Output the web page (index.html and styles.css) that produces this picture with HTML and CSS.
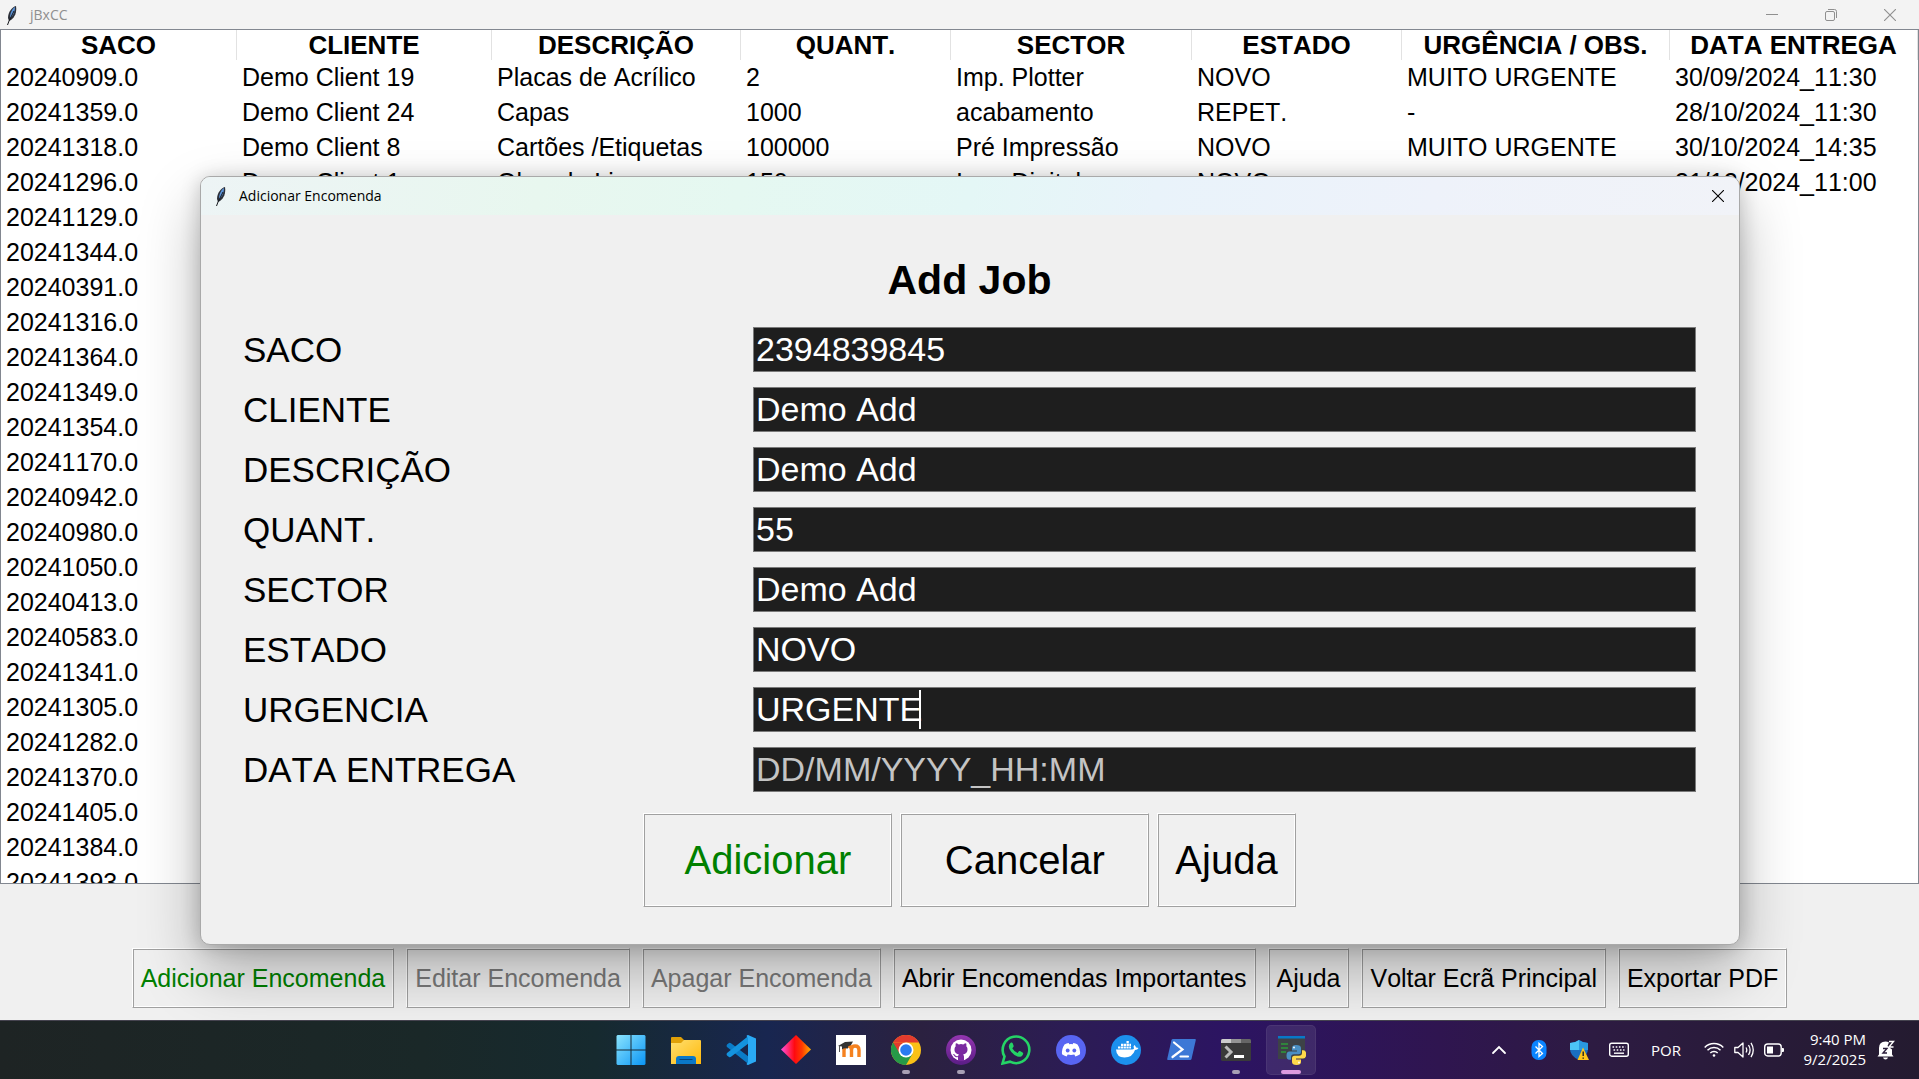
FILE: index.html
```html
<!DOCTYPE html>
<html lang="pt">
<head>
<meta charset="utf-8">
<title>jBxCC</title>
<link rel="stylesheet" href="styles.css">
</head>
<body>
<svg class="defs" width="0" height="0" aria-hidden="true">
  <symbol id="feather" viewBox="0 0 12 20">
    <path d="M10 1C6 2 2 7 2 13l1 3 2-1C9 12 11 7 10 1z" fill="#2b2f38"/>
    <path d="M9 2C6 4 4 8 4 13c3-2 5-6 5-11z" fill="#5b93d8"/>
    <path d="M8 6L3 16 1.500 20" fill="none" stroke="#16181c" stroke-width="1"/>
  </symbol>
  <symbol id="close" viewBox="0 0 12 12">
    <path d="M0 0l12 12M12 0L0 12" fill="none" stroke="currentColor" stroke-width="1.100"/>
  </symbol>
</svg>

<main class="window">
  <header class="titlebar">
    <svg class="feather"><use href="#feather"/></svg>
    <span class="titlebar-text">jBxCC</span>
    <div class="window-controls">
      <button type="button" aria-label="Minimizar"><svg width="12" height="12"><path d="M0 5.500h12" stroke="currentColor"/></svg></button>
      <button type="button" aria-label="Restaurar"><svg width="12" height="12" fill="none" stroke="currentColor"><rect x=".5" y="2.500" width="9" height="9" rx="1.500"/><path d="M3 .5h6.500a2 2 0 0 1 2 2V9"/></svg></button>
      <button type="button" aria-label="Fechar"><svg width="12" height="12"><use href="#close"/></svg></button>
    </div>
  </header>

  <div class="table-pane">
    <table class="jobs">
      <colgroup><col class="c-saco"><col class="c-cliente"><col class="c-desc"><col class="c-quant"><col class="c-sector"><col class="c-estado"><col class="c-urg"><col class="c-data"></colgroup>
      <thead>
        <tr><th>SACO</th><th>CLIENTE</th><th>DESCRIÇÃO</th><th>QUANT.</th><th>SECTOR</th><th>ESTADO</th><th>URGÊNCIA / OBS.</th><th>DATA ENTREGA</th></tr>
      </thead>
      <tbody>
        <tr><td>20240909.0</td><td>Demo Client 19</td><td>Placas de Acrílico</td><td>2</td><td>Imp. Plotter</td><td>NOVO</td><td>MUITO URGENTE</td><td>30/09/2024_11:30</td></tr>
        <tr><td>20241359.0</td><td>Demo Client 24</td><td>Capas</td><td>1000</td><td>acabamento</td><td>REPET.</td><td>-</td><td>28/10/2024_11:30</td></tr>
        <tr><td>20241318.0</td><td>Demo Client 8</td><td>Cartões /Etiquetas</td><td>100000</td><td>Pré Impressão</td><td>NOVO</td><td>MUITO URGENTE</td><td>30/10/2024_14:35</td></tr>
        <tr><td>20241296.0</td><td>Demo Client 1</td><td>Obra de Livro</td><td>150</td><td>Imp. Digital</td><td>NOVO</td><td>-</td><td>31/12/2024_11:00</td></tr>
        <tr><td>20241129.0</td></tr>
        <tr><td>20241344.0</td></tr>
        <tr><td>20240391.0</td></tr>
        <tr><td>20241316.0</td></tr>
        <tr><td>20241364.0</td></tr>
        <tr><td>20241349.0</td></tr>
        <tr><td>20241354.0</td></tr>
        <tr><td>20241170.0</td></tr>
        <tr><td>20240942.0</td></tr>
        <tr><td>20240980.0</td></tr>
        <tr><td>20241050.0</td></tr>
        <tr><td>20240413.0</td></tr>
        <tr><td>20240583.0</td></tr>
        <tr><td>20241341.0</td></tr>
        <tr><td>20241305.0</td></tr>
        <tr><td>20241282.0</td></tr>
        <tr><td>20241370.0</td></tr>
        <tr><td>20241405.0</td></tr>
        <tr><td>20241384.0</td></tr>
        <tr><td>20241393.0</td></tr>
      </tbody>
    </table>
  </div>

  <footer class="actions">
    <button class="btn primary" type="button">Adicionar Encomenda</button>
    <button class="btn" type="button" disabled>Editar Encomenda</button>
    <button class="btn" type="button" disabled>Apagar Encomenda</button>
    <button class="btn" type="button">Abrir Encomendas Importantes</button>
    <button class="btn" type="button">Ajuda</button>
    <button class="btn" type="button">Voltar Ecrã Principal</button>
    <button class="btn" type="button">Exportar PDF</button>
  </footer>
</main>

<section class="dialog" role="dialog" aria-labelledby="dialog-title">
  <header class="dialog-bar">
    <svg class="feather"><use href="#feather"/></svg>
    <span class="titlebar-text">Adicionar Encomenda</span>
    <button class="dialog-close" type="button" aria-label="Fechar"><svg width="12" height="12"><use href="#close"/></svg></button>
  </header>
  <form class="dialog-form">
    <h1 id="dialog-title">Add Job</h1>
    <div class="field"><label for="f-saco">SACO</label><input id="f-saco" type="text" value="2394839845"></div>
    <div class="field"><label for="f-cliente">CLIENTE</label><input id="f-cliente" type="text" value="Demo Add"></div>
    <div class="field"><label for="f-desc">DESCRIÇÃO</label><input id="f-desc" type="text" value="Demo Add"></div>
    <div class="field"><label for="f-quant">QUANT.</label><input id="f-quant" type="text" value="55"></div>
    <div class="field"><label for="f-sector">SECTOR</label><input id="f-sector" type="text" value="Demo Add"></div>
    <div class="field"><label for="f-estado">ESTADO</label><input id="f-estado" type="text" value="NOVO"></div>
    <div class="field has-caret"><label for="f-urg">URGENCIA</label><input id="f-urg" type="text" value="URGENTE"><span class="caret"></span></div>
    <div class="field"><label for="f-data">DATA ENTREGA</label><input id="f-data" type="text" placeholder="DD/MM/YYYY_HH:MM"></div>
    <div class="dialog-buttons">
      <button class="btn large wide primary" type="button">Adicionar</button>
      <button class="btn large wide" type="button">Cancelar</button>
      <button class="btn large" type="button">Ajuda</button>
    </div>
  </form>
</section>

<nav class="taskbar" aria-label="Barra de tarefas">
  <div class="apps">
    <button type="button" aria-label="Iniciar"><svg viewBox="0 0 30 30"><defs><linearGradient id="win" x1="0" y1="0" x2="1" y2="1"><stop offset="0" stop-color="#8be4fd"/><stop offset="1" stop-color="#0a95f5"/></linearGradient></defs><path fill="url(#win)" d="M1.500 0H14.500v14.500H.5V1zM15.500 0H28.500l1 1v13.500h-14zM.5 15.500h14V30H1.500l-1-1zM15.500 15.500h14V29l-1 1h-13z"/></svg></button>
    <button type="button" aria-label="Explorador"><svg viewBox="0 0 30 30"><defs><linearGradient id="fold" x1="0" y1="0" x2="1" y2="1"><stop offset="0" stop-color="#ffdf70"/><stop offset="1" stop-color="#ffb90a"/></linearGradient></defs><path d="M0 3q0-1 1-1h9l3 3v4H0z" fill="#e0a008"/><path d="M0 8h10l3-3h16q1 0 1 1v23H0z" fill="url(#fold)"/><path d="M5 29v-5q0-3 3-3h14q3 0 3 3v5z" fill="#0a78c8"/><path d="M8.500 24.500h13" stroke="#06447a"/></svg></button>
    <button type="button" aria-label="Visual Studio Code"><svg viewBox="0 0 30 30"><path d="M1 9.500L3 8q1-.6 2 .2L23 22v7.500L1 12q-1-1 0-2.500z" fill="#0a7cc8"/><path d="M1 20.500L3 22q1 .6 2-.2L23 8V.5L1 18q-1 1 0 2.500z" fill="#1493de"/><path d="M22 0l8 3.500v23L22 30q-1 0-1.500-1L22 27V3l-1.500-2q.5-1 1.500-1z" fill="#2aaaf5"/></svg></button>
    <button type="button" aria-label="Jogo"><svg viewBox="0 0 30 30"><defs><linearGradient id="dia"><stop offset="0" stop-color="#ff50e0"/><stop offset=".45" stop-color="#ff0a10"/><stop offset=".7" stop-color="#ff3a00"/><stop offset="1" stop-color="#ffb000"/></linearGradient></defs><path d="M15 0l15 14.500L15 29 0 14.500z" fill="url(#dia)"/></svg></button>
    <button type="button" aria-label="Moodle"><svg viewBox="0 0 30 30"><path fill="#fff" d="M0 0h30v30H0z"/><path d="M8 22v-7q0-4 4-4 3.500 0 3.500 4v7M15.500 15q0-4 3.500-4 4 0 4 4v7" fill="none" stroke="#f58220" stroke-width="3.400"/><path d="M2 11l7-4 8-.500-2 3.500-3 1.500v2q-4-1-6 1v-3z" fill="#333"/><path d="M3.500 11v6" stroke="#555"/></svg></button>
    <button class="running" type="button" aria-label="Chrome"><svg viewBox="0 0 30 30"><circle cx="15" cy="15" r="15" fill="#fbc117"/><path d="M2 7.500A15 15 0 0 0 15 30l6.500-11.300L15 15z" fill="#269a48"/><path d="M2 7.500A15 15 0 0 1 28 7.500H12z" fill="#e33b2e"/><path d="M2 7.500l6.500 11.200L15 7.500z" fill="#e33b2e"/><path d="M2 7.500l6.500 11.200-4 3z" fill="#269a48"/><circle cx="15" cy="15" r="7.500" fill="#fff"/><circle cx="15" cy="15" r="5.800" fill="#2a7bf0"/></svg></button>
    <button class="running" type="button" aria-label="GitHub Desktop"><svg viewBox="0 0 30 30"><defs><linearGradient id="gh" x1="0" y1="0" x2="0" y2="1"><stop offset="0" stop-color="#9436b0"/><stop offset="1" stop-color="#5b1d86"/></linearGradient></defs><circle cx="15" cy="15" r="15" fill="url(#gh)"/><circle cx="15" cy="15" r="10.500" fill="#fff"/><path d="M12 26v-4q-3 .8-4-1.500-.5-1-1.200-1.500 1.400-.4 2.400 1.200 1 1.400 2.900.8.100-1 .8-1.600Q8 18.500 8.500 14q.1-1.600 1.200-2.800-.4-1.400.2-3 1.200 0 2.900 1.200 2.200-.6 4.400 0 1.700-1.200 2.900-1.200.6 1.600.2 3 1.200 1.200 1.200 2.800.4 4.500-4.400 5.400.9.800.9 2.400V26z" fill="#7a2aa0"/></svg></button>
    <button type="button" aria-label="WhatsApp"><svg viewBox="0 0 30 30"><path d="M1.500 28.500l2-7A13.300 13.300 0 1 1 9 26.700z" fill="none" stroke="#25d366" stroke-width="2.600"/><path d="M10 7.500q1.300-.3 1.700.8l1 2.600q.1.700-.5 1.300l-.9 1q1.700 3.400 5.300 4.700l1.300-1.600q.5-.5 1.100-.2l2.600 1.300q.8.400.5 1.500-.8 2.900-4.200 2.900Q14 21.500 10.300 17 7.800 14 7.800 11.500q0-2.600 2.200-4z" fill="#25d366"/></svg></button>
    <button type="button" aria-label="Discord"><svg viewBox="0 0 30 30"><circle cx="15" cy="15" r="15" fill="#5865f2"/><path d="M8.500 9.500q2-1.200 4.200-1.500l.6 1.200q1.700-.3 3.400 0l.6-1.200q2.200.3 4.200 1.500 3 4.500 2.500 9.700-2 1.600-4.600 2.300l-1.100-1.900q-3.300.9-6.600 0l-1.100 1.900Q8 20.800 6 19.200 5.500 14 8.500 9.500z" fill="#fff"/><ellipse cx="11.700" cy="15.500" rx="1.900" ry="2.100" fill="#5865f2"/><ellipse cx="18.300" cy="15.500" rx="1.900" ry="2.100" fill="#5865f2"/></svg></button>
    <button type="button" aria-label="Docker"><svg viewBox="0 0 30 30"><circle cx="15" cy="15" r="15" fill="#1c90ed"/><path d="M5 14.500h16q1.500 0 2-1-1-2 .2-3.500 1.500.9 1.800 2.500 1.500-.1 2.500.5-1 2-3.500 2-2.500 7.500-10.500 7.500Q5.500 22.500 5 14.500z" fill="#fff"/><path d="M7 12.500h13M10 9.800h10M15.500 7.200h2.500" stroke="#fff" stroke-width="2.200" stroke-dasharray="2.300 .5"/></svg></button>
    <button type="button" aria-label="PowerShell"><svg viewBox="0 0 30 30"><path d="M7 4h22q1 0 .8 1l-4.300 19q-.3 1-1.300 1H2q-1 0-.8-1L5.500 5q.3-1 1.500-1z" fill="#3d78d6"/><path d="M8 7.500l8.500 7L6.500 22M14.500 21.500h7.500" fill="none" stroke="#fff" stroke-width="2.200" stroke-linecap="round"/></svg></button>
    <button class="running" type="button" aria-label="Terminal"><svg viewBox="0 0 30 30"><rect y="4" width="30" height="22" rx="1.500" fill="#3a3a3a"/><path d="M0 8V5.500Q0 4 1.500 4H10v4z" fill="#ccc"/><path d="M10 4h10v4H10z" fill="#949494"/><path d="M20 4h8.500Q30 4 30 5.500V8H20z" fill="#666"/><path d="M4.500 11.500L10 17l-5.500 5.500" fill="none" stroke="#bbb" stroke-width="3"/><path d="M13 21.500h10" stroke="#fff" stroke-width="3"/></svg></button>
    <button class="running active" type="button" aria-label="Python"><svg viewBox="0 0 30 30"><path d="M2 1h27v23H2z" fill="#3d4247"/><path d="M2 1h27v2.500H2z" fill="#0878c8"/><path d="M5 9h7M5 13h7M5 17h5" stroke="#2d9b3a" stroke-width="1.300"/><path d="M20 10q-4 0-4 3v2.500h5v1h-7.500q-3 0-3 4.200 0 4 2.800 4H15v-2.500q0-3 3-3h4.500q2.500 0 2.500-2.500V13q0-3-5-3z" fill="#4a8fc4"/><path d="M20.500 30q4.500 0 4.500-3v-2.500h-5v-1h7q3.200 0 3.200-4.200 0-4-2.800-4H26v2.500q0 3-3 3h-4.500Q16 20.800 16 23.500V27q0 3 4.500 3z" fill="#ffd94a"/><circle cx="18" cy="12.500" r=".9" fill="#fff"/><circle cx="23" cy="27.500" r=".9" fill="#fff"/></svg></button>
  </div>
  <div class="tray">
    <button type="button" aria-label="Mostrar ícones ocultos"><svg width="20" height="20" viewBox="0 0 20 20"><path d="M4 13l6-6 6 6" fill="none" stroke="#fff" stroke-width="1.800" stroke-linecap="round"/></svg></button>
    <button type="button" aria-label="Bluetooth"><svg width="20" height="20" viewBox="0 0 20 20"><rect x="2.500" width="15" height="20" rx="7" fill="#0a84ff"/><path d="M6.500 6.500l7 7L10 16.500v-13l3.500 3-7 7" fill="none" stroke="#fff" stroke-width="1.300"/></svg></button>
    <button type="button" aria-label="Segurança"><svg width="20" height="20" viewBox="0 0 20 20"><path d="M10 0q4 3 9 3v6q0 7-9 11Q1 16 1 9V3q5 0 9-3z" fill="#1a6fc0"/><path d="M10 0v10H1V3q5 0 9-3z" fill="#4cc4f5"/><path d="M10 0q4 3 9 3v7h-9z" fill="#2a9ae0"/><path d="M14 7.500L20 20H8.500z" fill="#ffc61a"/><path d="M14.200 11.500v4.500M14.200 17.500v1.300" stroke="#222" stroke-width="1.400"/></svg></button>
    <button type="button" aria-label="Teclado"><svg width="20" height="20" viewBox="0 0 20 20" fill="none" stroke="#fff"><rect x=".7" y="3.200" width="18.600" height="13" rx="2" stroke-width="1.400"/><path d="M3.500 7h13M4.500 10h11" stroke-width="1.600" stroke-dasharray="1.600 1.600"/><path d="M5 13.200h10" stroke-width="1.400"/></svg></button>
    <span class="lang">POR</span>
    <button class="status" type="button" aria-label="Rede, som e bateria">
      <svg width="20" height="20" viewBox="0 0 20 20" fill="none" stroke="#fff" stroke-width="1.500"><path d="M.7 7.500a13 13 0 0 1 18.600 0M3.500 10.300a9.200 9.200 0 0 1 13 0M6.300 13a5.200 5.200 0 0 1 7.400 0"/><circle cx="10" cy="15.500" r="1.300" fill="#fff" stroke="none"/></svg>
      <svg width="20" height="20" viewBox="0 0 20 20" fill="none" stroke="#fff" stroke-width="1.300"><path d="M.8 7.500H4L9 3v14l-5-4.500H.8z" stroke-linejoin="round"/><path d="M12 7.500q1.600 2.500 0 5M14.500 5q3.200 5 0 10M17 2.800q4.500 7.200 0 14.400"/></svg>
      <svg width="20" height="20" viewBox="0 0 20 20"><rect x=".7" y="4" width="16.500" height="12" rx="3" fill="none" stroke="#fff" stroke-width="1.400"/><path d="M3 6.500h6v7H3z" fill="#fff"/><path d="M18 8h1q1 0 1 1v2q0 1-1 1h-1z" fill="#fff"/></svg>
    </button>
    <div class="clock"><time datetime="21:40">9:40 PM</time><time datetime="2025-09-02">9/2/2025</time></div>
    <button type="button" aria-label="Notificações"><svg width="20" height="20" viewBox="0 0 20 20"><path d="M3 14.500V8q0-6.500 6.500-6.500 2 0 3.500 1L11.500 6 16 9.500v5l1.500 2H1.500z" fill="#fff"/><path d="M7 17.500h5q-.5 2-2.500 2t-2.500-2z" fill="#fff"/><path d="M7 8.500h4L7 13h4" fill="none" stroke="#2a1c3a" stroke-width="1.400"/><path d="M13 1.500h4.500L13 7h4.500" fill="none" stroke="#fff" stroke-width="1.400"/></svg></button>
  </div>
</nav>
</body>
</html>
```
FILE: styles.css
```css
* { box-sizing: border-box; }

body {
  margin: 0;
  height: 100vh;
  display: flex;
  flex-direction: column;
  overflow: hidden;
  position: relative;
  background: #f0f0f0;
  color: #000;
  font-family: "Liberation Sans", Arial, sans-serif;
  font-kerning: none;
}

button {
  margin: 0;
  padding: 0;
  border: 0;
  background: none;
  color: inherit;
  font: inherit;
}

.defs { position: absolute; }

/* Main window */
.window {
  flex: 1;
  min-height: 0;
  display: flex;
  flex-direction: column;
}

.titlebar {
  flex: none;
  height: 29px;
  display: flex;
  align-items: center;
  gap: 12px;
  padding-left: 6px;
  background: #f3f3f3;
  color: #8f8f8f;
}

.titlebar-text {
  font: 14px/20px "Open Sans", "Noto Sans", sans-serif;
}

.feather { width: 12px; height: 20px; }

.window-controls {
  margin-left: auto;
  display: flex;
}

.window-controls button {
  width: 59px;
  height: 29px;
  display: grid;
  place-items: center;
}

/* Job list */
.table-pane {
  flex: 1;
  min-height: 0;
  overflow: hidden;
  background: #fff;
  border: 1px solid #828790;
}

.jobs {
  width: 100%;
  table-layout: fixed;
  border-collapse: separate;
  border-spacing: 0;
  font-size: 25px;
  white-space: nowrap;
}

.c-saco { width: 236px; }
.c-cliente { width: 255px; }
.c-desc { width: 249px; }
.c-quant { width: 210px; }
.c-sector { width: 241px; }
.c-estado { width: 210px; }
.c-urg { width: 268px; }
.c-data { width: 248px; }

.jobs th {
  height: 30px;
  padding: 0;
  border-right: 1px solid #e2e2e2;
  font-size: 26px;
  line-height: 30px;
  text-align: center;
}

.jobs td {
  height: 35px;
  padding: 0 5px;
  line-height: 35px;
}

/* Buttons */
.btn {
  padding: 0 8px;
  height: 60px;
  border: 1px solid;
  border-color: #fff #a0a0a0 #a0a0a0 #fff;
  box-shadow: inset 1px 1px #a0a0a0, inset -1px -1px #fff;
  background: #f0f0f0;
  font-size: 25px;
  white-space: nowrap;
}

.btn:disabled { color: #7a7a7a; }
.btn.primary { color: #008000; }

.btn.large {
  height: 94px;
  padding: 0 17px;
  font-size: 40px;
}

.btn.wide { width: 249px; }

.actions {
  flex: none;
  display: flex;
  justify-content: center;
  gap: 12px;
  padding: 64px 0 12px;
}

/* Add-job window */
.dialog {
  position: absolute;
  top: 176px;
  left: 200px;
  right: 179px;
  overflow: hidden;
  border: 1px solid #a9a9a9;
  border-radius: 10px;
  background: #f0f0f0;
  box-shadow: 0 28px 60px rgba(0, 0, 0, 0.28), 0 2px 20px rgba(0, 0, 0, 0.2);
}

.dialog-bar {
  height: 38px;
  display: flex;
  align-items: center;
  gap: 12px;
  padding: 0 15px 0 14px;
  background: linear-gradient(100deg, #edf4f5 0%, #e8f7ef 22%, #e5f8f1 35%, #e4f7f6 50%, #e9f3fa 62%, #eef2fa 80%, #f1f3f8 100%);
}

.dialog-close {
  margin-left: auto;
  height: 12px;
  display: flex;
}

.dialog-form {
  display: flex;
  flex-direction: column;
  gap: 15px;
  padding: 41px 43px 37px 42px;
}

.dialog-form h1 {
  margin: 0;
  padding-bottom: 8px;
  font-size: 41px;
  line-height: 48px;
  text-align: center;
}

.field {
  display: grid;
  grid-template-columns: 510px 1fr;
  align-items: center;
  height: 45px;
}

.field label {
  font-size: 35px;
  line-height: 45px;
}

.field input {
  width: 100%;
  height: 45px;
  padding: 0 2px;
  border: 1px solid #7a7a7a;
  border-radius: 0;
  background: #1e1e1e;
  color: #fff;
  font: 34px "Liberation Sans", Arial, sans-serif;
  font-kerning: none;
  outline: 0;
}

.field input::placeholder { color: #c4c4c4; }

.has-caret { position: relative; }

.caret {
  position: absolute;
  left: 676px;
  top: 3px;
  width: 2px;
  height: 39px;
  background: #fff;
}

.dialog-buttons {
  display: flex;
  justify-content: center;
  gap: 8px;
  padding-top: 6px;
}

/* Taskbar */
.taskbar {
  position: relative;
  flex: none;
  height: 59px;
  display: grid;
  grid-template-columns: 1fr auto 1fr;
  align-items: center;
  padding-left: 2px;
  border-top: 1px solid #45434f;
  background: linear-gradient(90deg, #1e2424 0%, #1a2828 22%, #162a2f 31%, #182650 40%, #2b2140 48%, #2c1c55 56%, #2c1462 64%, #2f1550 75%, #2d1b42 83%, #241b30 100%);
  color: #fff;
}

.apps {
  grid-column: 2;
  display: flex;
  gap: 5px;
}

.apps button {
  position: relative;
  width: 50px;
  height: 50px;
  display: grid;
  place-items: center;
  border-radius: 5px;
}

.apps svg { width: 30px; height: 30px; }

.apps .active {
  background: rgba(255, 255, 255, 0.09);
  box-shadow: inset 0 0 0 1px rgba(255, 255, 255, 0.06);
}

.running::after {
  content: "";
  position: absolute;
  bottom: 1px;
  left: 50%;
  width: 8px;
  height: 4px;
  margin-left: -4px;
  border-radius: 2px;
  background: #a79fb4;
}

.running.active::after {
  width: 20px;
  margin-left: -10px;
  background: #dd9be0;
}

.tray {
  display: flex;
  justify-content: flex-end;
  align-items: center;
  gap: 20px;
  padding-right: 23px;
  font: 15px/20px "Open Sans", "Noto Sans", sans-serif;
}

.tray button { display: flex; }
.tray .status { gap: 10px; }
.lang { width: 35px; text-align: center; }

.clock {
  display: flex;
  flex-direction: column;
  text-align: right;
  margin-right: -10px;
  padding-bottom: 2px;
}
```
